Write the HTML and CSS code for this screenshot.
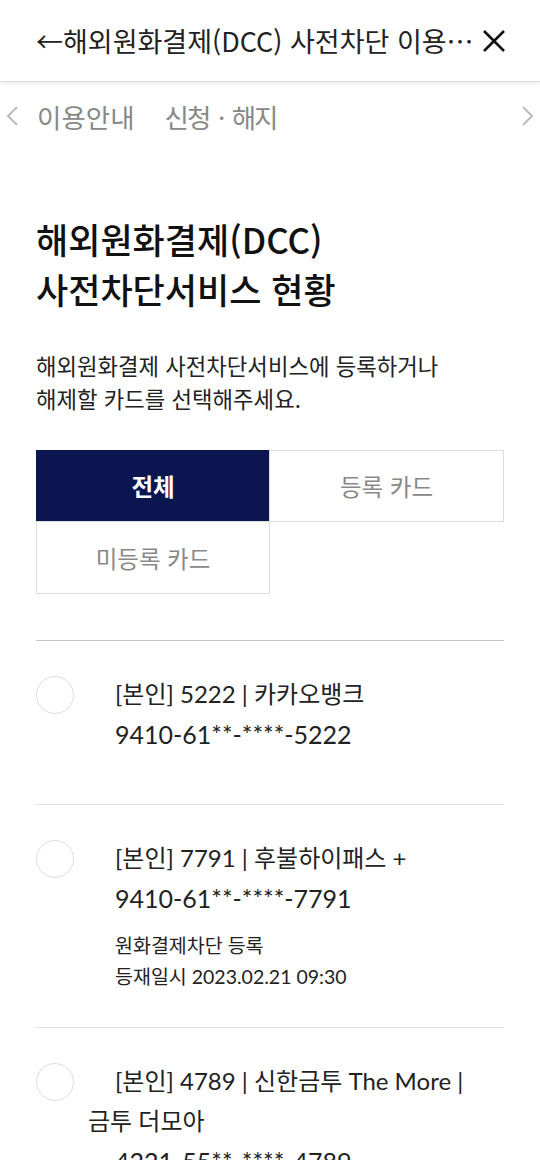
FILE: index.html
```html
<!DOCTYPE html>
<html lang="ko">
<head>
<meta charset="utf-8">
<title>해외원화결제(DCC) 사전차단 이용안내</title>
<link rel="stylesheet" href="styles.css">
</head>
<body>
<header class="topbar">
  <h1 class="topbar-title">←해외원화결제(DCC) 사전차단 이용⋯</h1>
  <button class="close-btn" aria-label="닫기">
    <svg width="24" height="24" viewBox="0 0 24 24"><path d="M2 2L22 22M22 2L2 22" stroke="#111" stroke-width="2.6" fill="none"/></svg>
  </button>
</header>

<nav class="subnav">
  <span class="chev">
    <svg width="14" height="22" viewBox="0 0 14 22"><path d="M12 2L3 11L12 20" stroke="#bbb" stroke-width="2" fill="none"/></svg>
  </span>
  <div class="subnav-items">
    <a class="subnav-item">이용안내</a>
    <a class="subnav-item tight">신청ㆍ해지</a>
  </div>
  <span class="chev">
    <svg width="14" height="22" viewBox="0 0 14 22"><path d="M2 2L11 11L2 20" stroke="#bbb" stroke-width="2" fill="none"/></svg>
  </span>
</nav>

<main class="content">
  <h2 class="page-title">해외원화결제(DCC)<br>사전차단서비스 현황</h2>
  <p class="desc">해외원화결제 사전차단서비스에 등록하거나<br>해제할 카드를 선택해주세요.</p>

  <div class="filters">
    <button class="filter active">전체</button>
    <button class="filter col2">등록 카드</button>
    <button class="filter row2">미등록 카드</button>
  </div>

  <ul class="cards">
    <li class="card card-plain">
      <div class="card-name"><span class="radio"></span>[본인] 5222 | 카카오뱅크</div>
      <div class="card-no">9410-61**-****-5222</div>
    </li>
    <li class="card">
      <div class="card-name"><span class="radio"></span>[본인] 7791 | 후불하이패스 +</div>
      <div class="card-no">9410-61**-****-7791</div>
      <div class="card-sub">원화결제차단 등록<br>등재일시 2023.02.21 09:30</div>
    </li>
    <li class="card">
      <div class="card-name"><span class="radio"></span>[본인] 4789 | 신한금투 The More | 금투 더모아</div>
      <div class="card-no">4221-55**-****-4789</div>
    </li>
  </ul>
</main>
</body>
</html>
```

FILE: styles.css
```css
* { box-sizing: border-box; }
html, body { margin: 0; padding: 0; background: #fff; }
body {
  font-family: "Noto Sans CJK KR", "Noto Sans", sans-serif;
  color: #222;
  width: 540px;
  overflow: hidden;
}

.topbar {
  height: 82px;
  display: flex;
  align-items: center;
  padding: 0 34px 0 36px;
  border-bottom: 1px solid #dcdcdc;
  box-shadow: 0 2px 4px rgba(0,0,0,0.07);
}
.topbar-title {
  flex: 1;
  min-width: 0;
  margin: 0;
  font-size: 27px;
  font-weight: 400;
  color: #222;
  white-space: nowrap;
  overflow: hidden;
}
.close-btn {
  border: 0;
  background: none;
  padding: 0;
  width: 24px;
  height: 24px;
  display: flex;
  flex: none;
}

.subnav {
  height: 68px;
  display: flex;
  align-items: center;
  padding: 0 5px;
}
.chev { display: flex; width: 14px; }
.subnav-items {
  flex: 1;
  display: flex;
  gap: 30px;
  padding-left: 18px;
}
.subnav-item {
  font-size: 26.5px;
  color: #888;
}
.subnav-item.tight { letter-spacing: -2px; }

.content { padding: 0 36px; }

.page-title {
  margin: 64px 0 0;
  font-size: 35px;
  line-height: 50px;
  font-weight: 500;
  color: #111;
}
.desc {
  margin: 35px 0 0;
  font-size: 22.3px;
  line-height: 33px;
  color: #222;
}

.filters {
  margin-top: 35px;
  display: grid;
  grid-template-columns: 1fr 1fr;
  grid-auto-rows: 72px;
}
.filter {
  font-family: inherit;
  font-size: 23.5px;
  color: #888;
  background: #fff;
  border: 1px solid #ddd;
  padding: 0;
}
.filter.col2 { margin-left: -1px; }
.filter.row2 { margin-top: -1px; }
.filter.active {
  background: #0b1650;
  border-color: #0b1650;
  color: #fff;
  font-weight: 700;
}

.cards {
  list-style: none;
  margin: 46px 0 0;
  padding: 0;
  border-top: 1px solid #c4c4c4;
}
.card {
  padding: 33px 0 35px;
  border-bottom: 1px solid #e2e2e2;
  font-family: Lato, "Noto Sans CJK KR", sans-serif;
  color: #222;
}
.card-plain { padding-bottom: 50px; }
.card-name {
  font-size: 24px;
  line-height: 40px;
  padding: 0 20px 0 52px;
}
.radio {
  display: inline-block;
  width: 38px;
  height: 38px;
  border: 1.5px solid #ddd;
  border-radius: 50%;
  margin-left: -52px;
  margin-right: 41px;
  vertical-align: -11px;
}
.card-no {
  font-size: 25px;
  line-height: 40px;
  padding-left: 79px;
}
.card-sub {
  margin-top: 12px;
  padding-left: 79px;
  font-size: 19.5px;
  line-height: 31px;
  color: #222;
}
```
